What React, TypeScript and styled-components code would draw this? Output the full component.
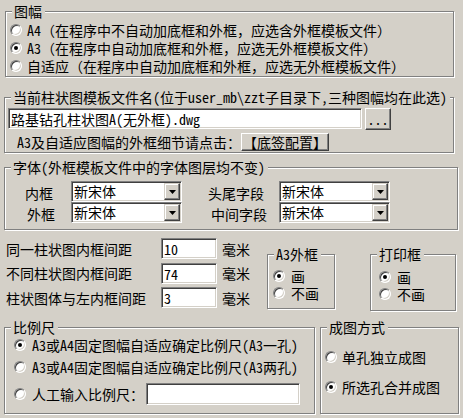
import React from "react"
import styled, { createGlobalStyle } from "styled-components"

const GlobalStyle = createGlobalStyle`
  html, body {
    margin: 0;
    padding: 0;
    background: #d4d0c8;
  }
  body {
    font-family: "Noto Sans Mono CJK SC", "Noto Sans CJK SC", sans-serif;
    font-size: 14px;
    color: #000;
  }
`

const Dialog = styled.div`
  width: 463px;
  height: 418px;
  box-sizing: border-box;
  padding-left: 4px;
  display: flex;
  flex-direction: column;
  overflow: hidden;
  background: #d4d0c8;
  line-height: 16px;
`

// etched frame like a win32 group box
const Group = styled.div<{ $w: number; $h: number; $top?: number; $left?: number }>`
  position: relative;
  flex-shrink: 0;
  box-sizing: border-box;
  width: ${p => p.$w}px;
  height: ${p => p.$h}px;
  margin-top: ${p => p.$top ?? 0}px;
  margin-left: ${p => p.$left ?? 0}px;
  border: 1px solid #808080;
  box-shadow: inset 1px 1px 0 #fff, 1px 1px 0 #fff;
`

const Legend = styled.span`
  position: absolute;
  top: -9px;
  left: 6px;
  padding: 0 3px 0 2px;
  background: #d4d0c8;
  white-space: nowrap;
`

const Body = styled.div<{ $pt: number; $pl: number }>`
  padding-top: ${p => p.$pt}px;
  padding-left: ${p => p.$pl}px;
`

const Option = styled.div<{ $h: number; $gap: number }>`
  display: flex;
  align-items: center;
  height: ${p => p.$h}px;
  gap: ${p => p.$gap}px;
  white-space: nowrap;
`

const RadioDot = styled.span<{ $on?: boolean }>`
  position: relative;
  flex-shrink: 0;
  box-sizing: border-box;
  width: 12px;
  height: 12px;
  border-radius: 50%;
  border: 1px solid;
  border-color: #808080 #fff #fff #808080;
  box-shadow: inset 1px 1px 0 #404040, inset -1px -1px 0 #d4d0c8;
  background: #fff;

  &::after {
    content: "";
    display: ${p => (p.$on ? "block" : "none")};
    position: absolute;
    left: 3px;
    top: 3px;
    width: 4px;
    height: 4px;
    border-radius: 50%;
    background: #000;
  }
`

const Field = styled.div<{ $w: number; $h?: number }>`
  flex-shrink: 0;
  box-sizing: border-box;
  width: ${p => p.$w}px;
  height: ${p => p.$h ?? 21}px;
  padding: 2px 0 0 2px;
  background: #fff;
  border: 1px solid;
  border-color: #808080 #fff #fff #808080;
  box-shadow: inset 1px 1px 0 #404040, inset -1px -1px 0 #d4d0c8;
  white-space: nowrap;
  overflow: hidden;
`

const Btn = styled.button<{ $w: number; $h: number }>`
  flex-shrink: 0;
  box-sizing: border-box;
  width: ${p => p.$w}px;
  height: ${p => p.$h}px;
  padding: 0;
  margin: 0;
  font: inherit;
  line-height: 16px;
  color: #000;
  background: #d4d0c8;
  border: 1px solid;
  border-color: #fff #404040 #404040 #fff;
  box-shadow: inset -1px -1px 0 #808080, inset 1px 1px 0 #d4d0c8;
  display: flex;
  align-items: center;
  justify-content: center;
  white-space: nowrap;
`

const FileRow = styled.div`
  display: flex;
  gap: 3px;
`

const NoteRow = styled.div`
  display: flex;
  align-items: center;
  margin-top: 3px;
  padding-left: 9px;
  white-space: nowrap;
`

const FontGrid = styled.div`
  display: grid;
  grid-template-columns: 66px 111px 97px 111px;
  grid-template-rows: 21px 21px;
  padding-top: 13px;
`

const FontLabel = styled.span<{ $indent: number }>`
  padding-left: ${p => p.$indent}px;
  padding-top: 4px;
  white-space: nowrap;
`

const Combo = styled(Field)`
  display: flex;
  justify-content: space-between;
  padding: 0 0 0 2px;
`

const ComboText = styled.span`
  padding-top: 1px;
`

const DropBtn = styled.span`
  box-sizing: border-box;
  width: 16px;
  height: 17px;
  margin: 1px 1px 0 0;
  background: #d4d0c8;
  border: 1px solid;
  border-color: #d4d0c8 #404040 #404040 #d4d0c8;
  box-shadow: inset -1px -1px 0 #808080, inset 1px 1px 0 #fff;
  display: flex;
  align-items: center;
  justify-content: center;
`

const MidRow = styled.div`
  display: flex;
  align-items: flex-start;
`

const SpacingGrid = styled.div`
  display: grid;
  grid-template-columns: 155px 56px 33px;
  grid-auto-rows: 21px;
  row-gap: 3.5px;
  align-items: center;
  margin: 8px 0 0 2px;
  white-space: nowrap;
`

const Unit = styled.span`
  padding-left: 5px;
`

const BottomRow = styled.div`
  display: flex;
  gap: 5px;
  margin-top: 16px;
`

const ManualInput = styled(Field)`
  margin-left: -4px;
`

const Arrow = () => (
  <svg width="7" height="4" viewBox="0 0 7 4">
    <polygon points="0,0 7,0 3.5,4" fill="#000" />
  </svg>
)

const Radio = ({ on, h, gap, children }: { on?: boolean; h: number; gap: number; children: React.ReactNode }) => (
  <Option $h={h} $gap={gap}>
    <RadioDot $on={on} />
    <span>{children}</span>
  </Option>
)

const FontCombo = () => (
  <Combo $w={111}>
    <ComboText>新宋体</ComboText>
    <DropBtn>
      <Arrow />
    </DropBtn>
  </Combo>
)

const spacings = [
  { label: "同一柱状图内框间距", value: "10" },
  { label: "不同柱状图内框间距", value: "74" },
  { label: "柱状图体与左内框间距", value: "3" },
]

export default function App() {
  return (
    <>
      <GlobalStyle />
      <Dialog>
        <Group $w={449} $h={66} $top={11} $left={1}>
          <Legend>图幅</Legend>
          <Body $pt={9} $pl={4}>
            <Radio h={18} gap={5}>A4（在程序中不自动加底框和外框，应选含外框模板文件）</Radio>
            <Radio h={18} gap={5} on>A3（在程序中自动加底框和外框，应选无外框模板文件）</Radio>
            <Radio h={18} gap={5}>自适应（在程序中自动加底框和外框，应选无外框模板文件）</Radio>
          </Body>
        </Group>

        <Group $w={450} $h={56} $top={20}>
          <Legend>当前柱状图模板文件名(位于user_mb\zzt子目录下,三种图幅均在此选)</Legend>
          <Body $pt={10} $pl={3}>
            <FileRow>
              <Field $w={354}>路基钻孔柱状图A(无外框).dwg</Field>
              <Btn $w={26} $h={22}>...</Btn>
            </FileRow>
            <NoteRow>
              <span>A3及自适应图幅的外框细节请点击：</span>
              <Btn $w={88} $h={18}>【底签配置】</Btn>
            </NoteRow>
          </Body>
        </Group>

        <Group $w={454} $h={63} $top={14}>
          <Legend>字体(外框模板文件中的字体图层均不变)</Legend>
          <FontGrid>
            <FontLabel $indent={20}>内框</FontLabel>
            <FontCombo />
            <FontLabel $indent={26}>头尾字段</FontLabel>
            <FontCombo />
            <FontLabel $indent={22}>外框</FontLabel>
            <FontCombo />
            <FontLabel $indent={29}>中间字段</FontLabel>
            <FontCombo />
          </FontGrid>
        </Group>

        <MidRow>
          <SpacingGrid>
            {spacings.map(s => (
              <React.Fragment key={s.label}>
                <span>{s.label}</span>
                <Field $w={56}>{s.value}</Field>
                <Unit>毫米</Unit>
              </React.Fragment>
            ))}
          </SpacingGrid>
          <Group $w={68} $h={55} $top={24} $left={17}>
            <Legend>A3外框</Legend>
            <Body $pt={12} $pl={5}>
              <Radio h={17} gap={6} on>画</Radio>
              <Radio h={17} gap={6}>不画</Radio>
            </Body>
          </Group>
          <Group $w={86} $h={57} $top={24} $left={35}>
            <Legend>打印框</Legend>
            <Body $pt={13} $pl={8}>
              <Radio h={17} gap={6} on>画</Radio>
              <Radio h={17} gap={6}>不画</Radio>
            </Body>
          </Group>
        </MidRow>

        <BottomRow>
          <Group $w={311} $h={87}>
            <Legend>比例尺</Legend>
            <Body $pt={6} $pl={9}>
              <Radio h={22} gap={6} on>A3或A4固定图幅自适应确定比例尺(A3一孔)</Radio>
              <Radio h={22} gap={6}>A3或A4固定图幅自适应确定比例尺(A3两孔)</Radio>
              <Option $h={22} $gap={6} style={{ marginTop: 5 }}>
                <RadioDot />
                <span>人工输入比例尺：</span>
                <ManualInput $w={154} $h={22} />
              </Option>
            </Body>
          </Group>
          <Group $w={139} $h={87}>
            <Legend>成图方式</Legend>
            <Body $pt={14} $pl={4}>
              <Radio h={30} gap={5}>单孔独立成图</Radio>
              <Radio h={30} gap={5} on>所选孔合并成图</Radio>
            </Body>
          </Group>
        </BottomRow>
      </Dialog>
    </>
  )
}
